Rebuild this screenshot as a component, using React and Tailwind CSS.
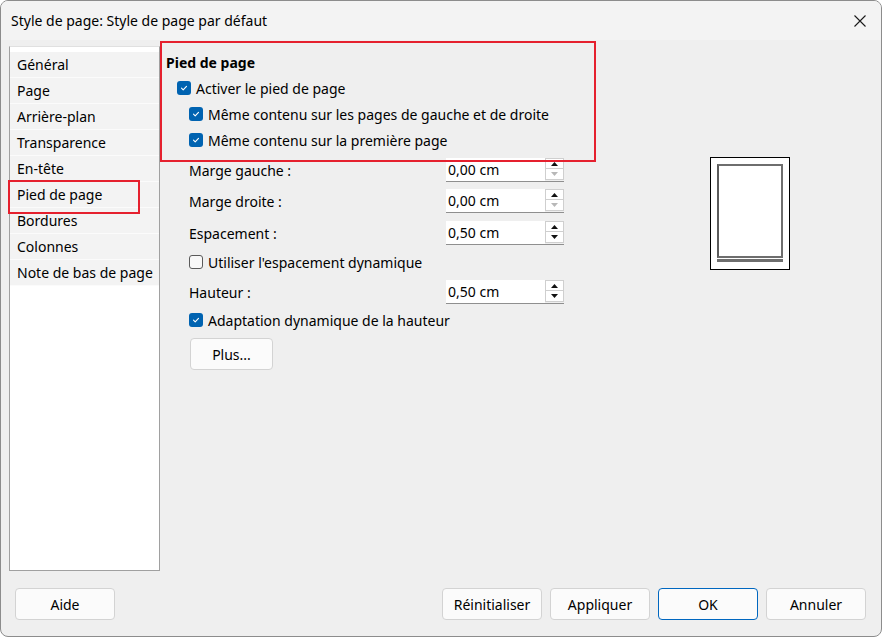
import React from 'react';

const font = { fontFamily: '"Noto Sans", "Liberation Sans", sans-serif' };

const pages = [
  'Général',
  'Page',
  'Arrière-plan',
  'Transparence',
  'En-tête',
  'Pied de page',
  'Bordures',
  'Colonnes',
  'Note de bas de page',
];

const Check = ({ checked }) =>
  checked ? (
    <span className="w-[14px] h-[14px] rounded-[3px] bg-[#0063b1] flex items-center justify-center shrink-0">
      <svg width="8" height="8" viewBox="0 0 8 8" fill="none">
        <path d="M1.5 4.2 L3.2 5.8 L6.5 2.3" stroke="white" strokeWidth="1.1" strokeLinecap="round" strokeLinejoin="round" />
      </svg>
    </span>
  ) : (
    <span className="w-[14px] h-[14px] rounded-[3px] border border-[#5a5a5a] bg-[#f8f8f8] shrink-0" />
  );

const CheckRow = ({ checked, label, className = '' }) => (
  <div className={`flex items-center gap-[5px] ${className}`}>
    <Check checked={checked} />
    <span>{label}</span>
  </div>
);

const Arrow = ({ up, disabled }) => (
  <svg width="7" height="4" viewBox="0 0 7 4">
    <path d={up ? 'M0 4 L3.5 0 L7 4 Z' : 'M0 0 L3.5 4 L7 0 Z'} fill={disabled ? '#b8b8b8' : '#111'} />
  </svg>
);

const Spin = ({ value, downDisabled }) => (
  <div className="flex w-[118px] h-[24px] bg-white border-b border-[#8f8f8f]">
    <div className="flex-1 flex items-center pl-[2px]">{value}</div>
    <div className="w-[19px] flex flex-col bg-[#efefef]">
      <div className="h-[11px] border border-[#cfcfcf] bg-white flex items-center justify-center">
        <Arrow up />
      </div>
      <div className="h-[11px] border border-t-0 border-[#cfcfcf] bg-white flex items-center justify-center">
        <Arrow disabled={downDisabled} />
      </div>
    </div>
  </div>
);

const SpinRow = ({ label, value, downDisabled, className = '' }) => (
  <div className={`flex items-center h-[28px] ${className}`}>
    <span className="w-[257px]">{label}</span>
    <Spin value={value} downDisabled={downDisabled} />
  </div>
);

const Button = ({ children, primary, className = '' }) => (
  <button
    className={`h-[32px] rounded-[4px] bg-[#fbfbfb] border ${
      primary ? 'border-[#0067c0]' : 'border-[#d3d3d3]'
    } text-[14px] text-black ${className}`}
    style={font}
  >
    {children}
  </button>
);

export default function App() {
  return (
    <div
      className="relative w-[882px] h-[637px] bg-[#efefef] border border-[#8c8c8c] rounded-[8px] overflow-hidden flex flex-col text-[14px] text-black"
      style={font}
    >
      {/* title bar */}
      <div className="h-[39px] shrink-0 bg-[#f3f3f3] flex items-center justify-between pl-[10px] pr-[15px]">
        <span>Style de page: Style de page par défaut</span>
        <svg width="12" height="12" viewBox="0 0 12 12">
          <path d="M0.5 0.5 L11.5 11.5 M11.5 0.5 L0.5 11.5" stroke="#1a1a1a" strokeWidth="1.1" />
        </svg>
      </div>

      <div className="flex flex-1">
        {/* left list */}
        <div className="ml-[8px] mt-[6px] w-[151px] h-[525px] bg-white border border-[#a0a0a0] border-t-[#e0e0e0] pt-[5px]">
          {pages.map((p) => (
            <div
              key={p}
              className="h-[26px] flex items-center pl-[7px] bg-[#f3f3f3] border-b border-[#fbfbfb] whitespace-nowrap overflow-hidden"
            >
              {p}
            </div>
          ))}
        </div>

        {/* content */}
        <div className="flex flex-col pl-[6px]">
          <div className="mt-[12px] h-[20px] flex items-center font-bold">Pied de page</div>
          <CheckRow checked label="Activer le pied de page" className="h-[26px] mt-[3px] ml-[11px]" />
          <CheckRow checked label="Même contenu sur les pages de gauche et de droite" className="h-[26px] ml-[23px]" />
          <CheckRow checked label="Même contenu sur la première page" className="h-[26px] ml-[23px]" />

          <div className="flex ml-[23px]">
            <div className="flex flex-col w-[375px]">
              <SpinRow label="Marge gauche :" value="0,00 cm" downDisabled className="mt-[3px]" />
              <SpinRow label="Marge droite :" value="0,00 cm" downDisabled className="mt-[3px]" />
              <SpinRow label="Espacement :" value="0,50 cm" className="mt-[4px]" />
              <CheckRow label="Utiliser l'espacement dynamique" className="h-[26px] mt-[2px]" />
              <SpinRow label="Hauteur :" value="0,50 cm" className="mt-[3px]" />
              <CheckRow checked label="Adaptation dynamique de la hauteur" className="h-[26px] mt-[1px]" />
              <Button className="mt-[5px] w-[83px] ml-[1px]">Plus...</Button>
            </div>

            {/* preview */}
            <div className="ml-[146px] mt-[4px] w-[80px] h-[113px] bg-white border border-black p-[6px] flex flex-col">
              <div className="h-[94px] border-2 border-[#6e6e6e] border-l-[#5a5a5a]" />
              <div className="mt-[1px] h-[3px] bg-[#6e6e6e]" />
            </div>
          </div>
        </div>
      </div>

      {/* bottom buttons */}
      <div className="h-[48px] shrink-0 flex items-start pl-[14px] pr-[15px]">
        <Button className="w-[100px]">Aide</Button>
        <div className="flex-1" />
        <div className="flex gap-[8px]">
          <Button className="w-[100px]">Réinitialiser</Button>
          <Button className="w-[100px]">Appliquer</Button>
          <Button primary className="w-[100px]">OK</Button>
          <Button className="w-[100px]">Annuler</Button>
        </div>
      </div>

      {/* annotation boxes */}
      <div className="absolute left-[159px] top-[40px] w-[436px] h-[121px] border-2 border-[#e5202e] pointer-events-none" />
      <div className="absolute left-[7px] top-[179px] w-[132px] h-[34px] border-2 border-[#e5202e] pointer-events-none" />
    </div>
  );
}
